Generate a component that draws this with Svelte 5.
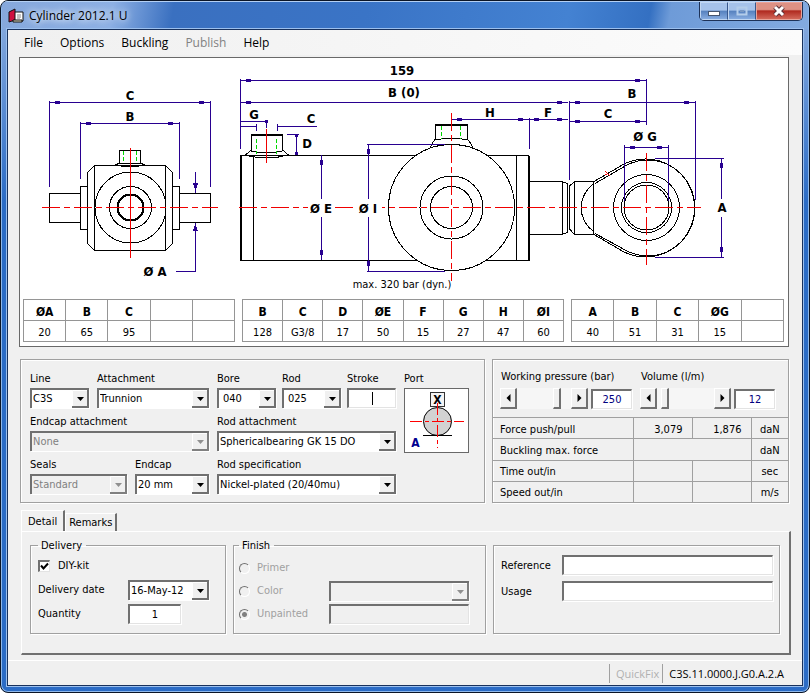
<script lang="ts">
	let pressure = $state(250);
	let volume = $state(12);
	let stroke = $state("");
	let port = $state("X");
	let tab = $state("Detail");

	const menus = ["File", "Options", "Buckling", "Publish", "Help"];

	// Dimension tables under the drawing
	const tables = [
		{ name: "Trunnion", head: ["ØA", "B", "C", "", ""], row: ["20", "65", "95", "", ""] },
		{
			name: "Cylinder",
			head: ["B", "C", "D", "ØE", "F", "G", "H", "ØI"],
			row: ["128", "G3/8", "17", "50", "15", "27", "47", "60"]
		},
		{ name: "Bearing", head: ["A", "B", "C", "ØG", ""], row: ["40", "51", "31", "15", ""] }
	];

	// Horizontal dimension lines: x1, x2, y
	const across = [
		[50, 210, 102],
		[81, 179, 123],
		[241, 646, 80],
		[241, 568, 102],
		[570, 695, 102],
		[452, 529, 119],
		[529, 568, 119],
		[570, 646, 121],
		[625, 668, 147]
	];

	// Vertical dimension lines: x, y1, y2
	const down = [
		[321, 155, 260],
		[368, 144, 271],
		[721, 158, 257]
	];

	// Letters in the drawing: text, centre x, baseline y
	const marks: [string, number, number][] = [
		["C", 130, 100],
		["B", 130, 121],
		["Ø A", 155, 276],
		["159", 402, 75],
		["B (0)", 404, 97],
		["G", 254, 119],
		["C", 311, 123],
		["D", 307, 148],
		["Ø E", 321, 213],
		["Ø I", 368, 213],
		["H", 490, 117],
		["F", 548, 117],
		["B", 632, 98],
		["C", 608, 118],
		["Ø G", 645, 141],
		["A", 722, 212]
	];

	const results = [
		{ label: "Force push/pull", cells: ["3,079", "1,876"], unit: "daN" },
		{ label: "Buckling max. force", cells: [""], unit: "daN" },
		{ label: "Time out/in", cells: ["", ""], unit: "sec" },
		{ label: "Speed out/in", cells: ["", ""], unit: "m/s" }
	];
</script>

{#snippet left()}
	<svg width="5" height="8" viewBox="0 0 5 8" aria-hidden="true"><path d="M4.5 0v8L.5 4z" /></svg>
{/snippet}

{#snippet right()}
	<svg width="5" height="8" viewBox="0 0 5 8" aria-hidden="true"><path d="M.5 0v8l4-4z" /></svg>
{/snippet}

<div class="window">
	<header class="titlebar">
		<svg class="app-icon" width="16" height="16" viewBox="0 0 16 16" aria-hidden="true">
			<path d="M6 4h9v9H6z" fill="#fff" stroke="#111" />
			<path d="M1 4l6-3v11l-6 2z" fill="#d01040" stroke="#111" />
			<path d="M5 12h9v2H5z" fill="#e8e4c8" stroke="#111" />
			<path d="M9 7h4M9 9h4M9 11h3" stroke="#888" />
		</svg>
		<h1>Cylinder 2012.1 U</h1>
		<div class="controls">
			<button aria-label="Minimize">
				<svg width="14" height="12" viewBox="0 0 14 12"><rect x="1.5" y="6.500" width="11" height="4" fill="#fff" stroke="#45556f" /></svg>
			</button>
			<button aria-label="Maximize" disabled>
				<svg width="14" height="12" viewBox="0 0 14 12" fill="none">
					<rect x="2.500" y="2.500" width="9" height="7" stroke="#b4cdea" stroke-width="2" />
					<rect x="5.500" y="5.500" width="3" height="1" stroke="#7898c4" />
				</svg>
			</button>
			<button class="close" aria-label="Close">
				<svg width="14" height="12" viewBox="0 0 14 12" fill="none">
					<path d="M3 2l8 8M11 2l-8 8" stroke="#5b3038" stroke-width="5" />
					<path d="M3 2l8 8M11 2l-8 8" stroke="#fff" stroke-width="3" />
				</svg>
			</button>
		</div>
	</header>

	<div class="client">
		<nav class="menu">
			{#each menus as item}
				<button disabled={item === "Publish"}>{item}</button>
			{/each}
		</nav>

		<main>
			<section class="sheet">
				<svg class="drawing" viewBox="20 58 768 240" role="img" aria-label="Cylinder drawing">
					<g class="body" shape-rendering="crispEdges">
						<!-- trunnion, end view -->
						<path d="M94.500 165.500h71l7 7v71l-7 7h-71l-7-7v-71zM94.500 165.500v85M165.500 165.500v85" />
						<path d="M87.500 186.500h-7v43h7M172.500 186.500h7v43h-7" />
						<path d="M80.500 193.500h-31v29h31M179.500 193.500h31v29h-31" />
						<path d="M119.500 163V150.500h21V163M119.500 163l-4 2M140.500 163l4 2M119.500 163h21M116 165q14 4 28 0" />
						<circle cx="130.500" cy="207.500" r="35.500" />
						<circle cx="130.500" cy="207.500" r="21" />
						<circle class="thick" cx="130.500" cy="207.500" r="13" />

						<!-- cylinder tube -->
						<path d="M241 155.500h175M487 155.500h42M241 260.500h175M487 260.500h42M253.500 155v105M516.500 155v105" />
						<path class="thick" d="M241 155v106M529 156v105" />
						<path d="M251.500 150v-15h31v15M251.500 150l-6 5M282.500 150l6 5M251.500 151q16 4 31 0M245 155q22 6 43 0" />
						<path class="thick" d="M251 135h32M435 125h33" />
						<path d="M435.500 125v14M467.500 125v14M435.500 140q16-4 32 0M435.500 139l-3 4-3 6M467.500 139l3 4 3 6" />
						<circle cx="451.500" cy="207.500" r="63" />
						<circle cx="451.500" cy="207.500" r="31.500" />
						<circle cx="451.500" cy="207.500" r="21" />

						<!-- rod and bearing -->
						<path d="M529 181.500h33l5 2v49l-5 2h-33M562.500 181v53M569.500 186l5-4.500h19.500M569.500 229l5 5.500h19.500M569.500 186v43M574.500 181v53M593.500 181v53" />
						<path d="M594 183c-17 14-17 36 0 49" />
						<path d="M594 181.500l30-17.500a49 49 0 1 1 0 88l-30-17.500M595 183.500l32-18.500a47 48 0 1 1 0 86l-32-17.500" />
						<circle cx="646.500" cy="207.500" r="33" />
						<circle cx="646.500" cy="207.500" r="25" />
						<circle cx="646.500" cy="207.500" r="22.500" />
					</g>

					<g class="thread" shape-rendering="crispEdges">
						<path d="M123.500 151v12M136.500 151v12M256.500 139v15M276.500 139v15M441.500 126v13M460.500 126v13" />
					</g>

					<g class="axis" shape-rendering="crispEdges">
						<path class="dash" d="M42 207.500h176M239 207.500h462" />
						<path d="M130.500 148v110M266.500 129v34M605 171l5 5M605 175l2-1" />
						<path class="dash" d="M451.500 113v168M646.500 153v112" />
					</g>

					<g class="dim" shape-rendering="crispEdges">
						<path d="M49.500 101v86M210.500 101v86M80.500 122v57M179.500 122v57" />
						<path d="M195.500 172v21M195.500 223v48h-20" />
						<path d="M240.500 79v70M646.500 79v46M569.500 101v79M695.500 101v99M529.500 118v31M624.500 145v56M668.500 145v56" />
						<path d="M241 121.500h25v6M241 126.500h15M256.500 124v7M277.500 124v7M277 126.500h40" />
						<path d="M287 134.500h12M296.500 134v21M367 144.500h78M367 271.500h78M655 158.500h69M655 257.500h69" />
						<path class="tip" d="M193 183h5l-2 7h-1zM195 225h1l2 6h-5zM265 120h3v3h-3zM295 134h3v3h-3zM295 152h3v3h-3zM245 126h6v1h-6zM282 126h6v1h-6z" />
						{#each across as [x1, x2, y]}
							<path d="M{x1} {y + 0.5}H{x2}" />
							<path class="tip" d="M{x1 + 5} {y - 1}h5v3h-5zM{x2 - 11} {y - 1}h5v3h-5z" />
						{/each}
						{#each down as [x, y1, y2]}
							<path d="M{x + 0.5} {y1}V{y2}" />
							<path class="tip" d="M{x - 1} {y1 + 5}h3v5h-3zM{x - 1} {y2 - 10}h3v5h-3z" />
						{/each}
					</g>

					<!-- letters sit on a gap in the lines -->
					<path class="gap" d="M308 199h27v18h-27zM355 199h27v18h-27zM714 199h16v18h-16z" />
					{#each marks as [text, x, y]}
						<text class="mark" {x} {y}>{text}</text>
					{/each}
					<text class="note" x="402" y="288">max. 320 bar (dyn.)</text>
				</svg>

				<div class="sizes">
					{#each tables as t}
						<table aria-label={t.name}>
							<thead>
								<tr>{#each t.head as h}<th>{h}</th>{/each}</tr>
							</thead>
							<tbody>
								<tr>{#each t.row as v}<td>{v}</td>{/each}</tr>
							</tbody>
						</table>
					{/each}
				</div>
			</section>

			<div class="middle">
				<section class="panel config">
					<div class="fields">
						<div class="row line-row">
							<label class="field">Line
								<select><option>C3S</option></select>
							</label>
							<label class="field">Attachment
								<select><option>Trunnion</option></select>
							</label>
						</div>
						<label class="field">Endcap attachment
							<select disabled><option>None</option></select>
						</label>
						<div class="row seal-row">
							<label class="field">Seals
								<select disabled><option>Standard</option></select>
							</label>
							<label class="field">Endcap
								<select><option>20 mm</option></select>
							</label>
						</div>
					</div>

					<div class="fields">
						<div class="row bore-row">
							<label class="field">Bore
								<select class="number"><option>040</option></select>
							</label>
							<label class="field">Rod
								<select class="number"><option>025</option></select>
							</label>
							<label class="field">Stroke
								<input class:caret={!stroke} type="text" bind:value={stroke} />
							</label>
						</div>
						<label class="field">Rod attachment
							<select><option>Sphericalbearing GK 15 DO</option></select>
						</label>
						<label class="field">Rod specification
							<select><option>Nickel-plated (20/40mu)</option></select>
						</label>
					</div>

					<div class="field port">
						<span id="port-label">Port</span>
						<button aria-labelledby="port-label" onclick={() => (port = port === "X" ? "A" : "X")}>
							<svg width="63" height="63" viewBox="0 0 63 63">
								<rect x="25.500" y="3.500" width="14" height="14" fill="#f4f4f4" stroke="#333" />
								<circle cx="32.500" cy="32.500" r="14" fill="#d2d2d2" stroke="#000" />
								<path d="M18 46.500h29" stroke="#000" />
								<text x="32.500" y="15" class="port-x">X</text>
								<text x="10.500" y="58" class="port-a">A</text>
								<path d="M5 32.500h54M32.500 14v45" stroke="#f00" stroke-dasharray="12 3 4 3" fill="none" />
							</svg>
						</button>
					</div>
				</section>

				<section class="panel output">
					<div class="gauges">
						<div class="gauge">
							<label for="pressure">Working pressure (bar)</label>
							<div class="scroll">
								<button aria-label="Less pressure" onclick={() => pressure--}>{@render left()}</button>
								<input id="pressure" type="range" min="0" max="320" bind:value={pressure} />
								<button aria-label="More pressure" onclick={() => pressure++}>{@render right()}</button>
								<input type="text" aria-label="Pressure value" bind:value={pressure} />
							</div>
						</div>
						<div class="gauge">
							<label for="volume">Volume (l/m)</label>
							<div class="scroll">
								<button aria-label="Less volume" onclick={() => volume--}>{@render left()}</button>
								<input id="volume" type="range" min="0" max="140" bind:value={volume} />
								<button aria-label="More volume" onclick={() => volume++}>{@render right()}</button>
								<input type="text" aria-label="Volume value" bind:value={volume} />
							</div>
						</div>
					</div>
					<table class="results">
						<colgroup><col class="name" /><col class="value" /><col class="value" /><col /></colgroup>
						<tbody>
							{#each results as r}
								<tr>
									<th scope="row">{r.label}</th>
									{#each r.cells as c}
										<td colspan={r.cells.length === 1 ? 2 : 1}>{c}</td>
									{/each}
									<td class="unit">{r.unit}</td>
								</tr>
							{/each}
						</tbody>
					</table>
				</section>
			</div>

			<div class="tabs" role="tablist">
				{#each ["Detail", "Remarks"] as name}
					<button role="tab" aria-selected={tab === name} class:active={tab === name} onclick={() => (tab = name)}>{name}</button>
				{/each}
			</div>
			<section class="page" role="tabpanel">
				<fieldset class="delivery">
					<legend>Delivery</legend>
					<label class="check"><input type="checkbox" checked /> DIY-kit</label>
					<label for="date">Delivery date</label>
					<select id="date"><option>16-May-12</option></select>
					<label for="quantity">Quantity</label>
					<input id="quantity" type="text" value="1" />
				</fieldset>

				<fieldset class="finish" disabled>
					<legend>Finish</legend>
					<label class="radio"><input type="radio" name="finish" /> Primer</label>
					<span></span>
					<label class="radio"><input type="radio" name="finish" /> Color</label>
					<select aria-label="Color"><option></option></select>
					<label class="radio"><input type="radio" name="finish" checked /> Unpainted</label>
					<input type="text" aria-label="Paint note" />
				</fieldset>

				<fieldset class="refs">
					<label for="reference">Reference</label>
					<input id="reference" type="text" />
					<label for="usage">Usage</label>
					<input id="usage" type="text" />
				</fieldset>
			</section>
		</main>

		<footer>
			<span class="quick">QuickFix</span>
			<span class="code">C3S.11.0000.J.G0.A.2.A</span>
		</footer>
	</div>
</div>

<style>
	:global(body) {
		background: #fff;
	}

	.window,
	.window * {
		box-sizing: border-box;
	}

	.window {
		font: 11px/16px "DejaVu Sans Condensed", "DejaVu Sans", Tahoma, sans-serif;
		color: #000;
		padding: 0 6px 6px;
		border: 1px solid #0b1526;
		border-radius: 8px;
		background: linear-gradient(#8fb0e0, #2b6cc6 200px);
		box-shadow: inset 0 0 0 1px #8fb8ea;
		overflow: hidden;
	}

	button,
	input,
	select {
		font: inherit;
		color: inherit;
		margin: 0;
		border-radius: 0;
	}

	.titlebar {
		display: flex;
		align-items: center;
		height: 28px;
		margin: 0 -5px;
		padding: 0 5px 0 6px;
		border-top: 1px solid #b4d0f4;
		background: linear-gradient(100deg, #86a8dc 0, #8db0e4 110px, #3a70c0 170px, #3a74c6 360px, #4482d2 560px, #3470c2 640px, #6e9bd8 660px, #83abe0 100%);
	}

	.app-icon {
		margin-right: 5px;
	}

	h1 {
		flex: 1;
		margin: 0;
		font: 12px/16px "Open Sans", "Noto Sans", sans-serif;
		text-shadow: 0 0 6px #fff, 0 0 8px #dfeaf8;
	}

	.controls {
		display: flex;
		align-self: flex-start;
		border: 1px solid #1d3258;
		border-top: 0;
		border-radius: 0 0 5px 5px;
		overflow: hidden;
	}

	.controls button {
		display: flex;
		align-items: center;
		justify-content: center;
		width: 28px;
		height: 18px;
		padding: 0;
		border: 1px solid #c0d6f2;
		border-right-color: #38578c;
		background: linear-gradient(#a5c2ea 45%, #5580be 50%, #86abdf);
	}

	.controls .close {
		width: 46px;
		border-color: #e8a49a;
		background: linear-gradient(#dd9184 40%, #b02a20 50%, #d2685a);
	}

	.client {
		border: 1px solid #18315c;
		outline: 1px solid #9cc0ee;
		background: #f0f0f0;
	}

	.menu {
		display: flex;
		gap: 17px;
		height: 25px;
		padding-left: 16px;
		background: linear-gradient(90deg, #f0f0f0, #fcfcfc);
	}

	.menu button {
		padding: 0;
		border: 0;
		background: none;
		font: 12px/24px "Open Sans", "Noto Sans", sans-serif;
	}

	.menu button:disabled {
		color: #828282;
	}

	main {
		padding: 2px 13px 5px 11px;
	}

	.sheet {
		border: 1px solid #696969;
		background: #fff;
	}

	.drawing {
		display: block;
		width: 100%;
	}

	.body {
		fill: none;
		stroke: #000;
	}

	.body .thick {
		stroke-width: 2;
	}

	.thread {
		stroke: #00d800;
		stroke-dasharray: 4 2;
	}

	.axis {
		stroke: #f00000;
	}

	.axis .dash {
		stroke-dasharray: 18 4 6 4;
	}

	.dim {
		fill: none;
		stroke: #280090;
	}

	.dim .tip {
		fill: #280090;
		stroke: none;
	}

	.gap {
		fill: #fff;
	}

	.mark {
		font-size: 13px;
		font-weight: bold;
		text-anchor: middle;
	}

	.note {
		text-anchor: middle;
	}

	table {
		border-collapse: collapse;
		table-layout: fixed;
		width: 100%;
	}

	.sizes {
		display: grid;
		grid-template-columns: 212fr 322fr 213fr;
		gap: 7px;
		padding: 1px 4px 4px 3px;
	}

	.sizes th,
	.sizes td {
		height: 21px;
		padding: 4px 0 0;
		border: 1px solid #959595;
		text-align: center;
	}

	.sizes th {
		font-size: 12px;
	}

	.middle {
		display: grid;
		grid-template-columns: 465fr 297fr;
		gap: 7px;
		margin: 12px 0 0 1px;
	}

	.panel {
		border: 1px solid #a0a0a0;
		box-shadow: 1px 1px 0 #fff, inset 1px 1px 0 #fff;
	}

	.config {
		display: grid;
		grid-template-columns: 1fr 1fr 65px;
		gap: 8px;
		padding: 10px 15px 8px 9px;
	}

	.fields {
		display: grid;
		gap: 5px;
		align-content: start;
	}

	.field {
		display: flex;
		flex-direction: column;
		min-width: 0;
		line-height: 18px;
	}

	.row {
		display: grid;
		gap: 8px;
	}

	.line-row {
		grid-template-columns: 59fr 112fr;
	}

	.seal-row {
		grid-template-columns: 97fr 74fr;
	}

	.bore-row {
		grid-template-columns: 59fr 59fr 49fr;
		gap: 6px;
	}

	select {
		appearance: none;
		width: 100%;
		height: 20px;
		padding: 0 17px 0 1px;
		border: solid #707070;
		border-width: 2px 0 0 2px;
		outline: 0;
		background: #fff url("data:image/svg+xml,%3Csvg xmlns='http://www.w3.org/2000/svg' width='17' height='18'%3E%3Cpath fill='%23f0f0f0' d='M0 0h17v18H0z'/%3E%3Cpath stroke='%23fff' fill='none' d='M.5 17V.5H15'/%3E%3Cpath stroke='%23707070' stroke-width='2' fill='none' d='M0 17h16V0'/%3E%3Cpath d='M5 7h7L8.500 11z'/%3E%3C/svg%3E") right top no-repeat;
		box-shadow: 1px 1px 0 #fff;
	}

	select:disabled {
		opacity: 1;
		color: #808080;
		background: #f0f0f0 url("data:image/svg+xml,%3Csvg xmlns='http://www.w3.org/2000/svg' width='17' height='18'%3E%3Cpath fill='%23f0f0f0' d='M0 0h17v18H0z'/%3E%3Cpath stroke='%23fff' fill='none' d='M.5 17V.5H15'/%3E%3Cpath stroke='%23808080' stroke-width='2' fill='none' d='M0 17h16V0'/%3E%3Cpath fill='%23909090' d='M5 7h7L8.500 11z'/%3E%3C/svg%3E") right top no-repeat;
	}

	select.number {
		padding-left: 4px;
	}

	input[type="text"] {
		width: 100%;
		height: 20px;
		padding: 0 2px;
		border: solid #707070;
		border-width: 2px 1px 1px 2px;
		border-right-color: #e3e3e3;
		border-bottom-color: #e3e3e3;
		outline: 0;
		background: #fff;
		box-shadow: 1px 1px 0 #fff;
		text-align: center;
	}

	input[type="text"].caret {
		background: #fff linear-gradient(#000, #000) center / 1px 13px no-repeat;
	}

	input[type="text"]:disabled {
		background: #f0f0f0;
	}

	.port button {
		width: 65px;
		height: 65px;
		padding: 0;
		border: 1px solid #696969;
		background: #fff;
	}

	.port svg {
		display: block;
	}

	.port-x {
		font-size: 12px;
		font-weight: bold;
		text-anchor: middle;
	}

	.port-a {
		font-size: 12px;
		font-weight: bold;
		text-anchor: middle;
		fill: #000090;
	}

	.output {
		display: flex;
		flex-direction: column;
		border-bottom: 0;
	}

	.gauges {
		display: grid;
		grid-template-columns: 132fr 135fr;
		gap: 8px;
		padding: 9px 13px 8px 7px;
	}

	.gauge {
		display: grid;
		gap: 3px;
	}

	.gauge label {
		padding-left: 1px;
	}

	.scroll {
		display: flex;
		align-items: center;
		height: 21px;
	}

	.scroll button {
		display: flex;
		align-items: center;
		justify-content: center;
		flex: none;
		width: 17px;
		height: 21px;
		padding: 0;
		border: solid;
		border-width: 1px 2px 2px 1px;
		border-color: #fff #707070 #707070 #fff;
		background: #f0f0f0;
	}

	.scroll input[type="text"] {
		flex: none;
		width: 41px;
		margin-left: 3px;
		color: #000080;
	}

	input[type="range"] {
		appearance: none;
		flex: 1;
		min-width: 0;
		width: 54px;
		height: 21px;
		background: #f6f6f6;
	}

	input[type="range"]::-webkit-slider-thumb {
		appearance: none;
		width: 8px;
		height: 21px;
		border: solid;
		border-width: 1px 2px 2px 1px;
		border-color: #fff #707070 #707070 #fff;
		background: #f0f0f0;
	}

	.results {
		flex: 1;
		height: 87px;
	}

	.results .name {
		width: 140px;
	}

	.results .value {
		width: 59px;
	}

	.results th,
	.results td {
		padding: 3px 9px 0 7px;
		border: 1px solid #a0a0a0;
		font-weight: normal;
		text-align: right;
	}

	.results th {
		border-left: 0;
		text-align: left;
	}

	.results .unit {
		padding: 3px 0 0;
		border-right: 0;
		text-align: center;
	}

	.tabs {
		display: flex;
		align-items: flex-end;
		height: 21px;
		margin: 7px 0 0 2px;
	}

	.tabs button {
		height: 18px;
		padding: 0 3px;
		border: solid;
		border-width: 1px 2px 0 1px;
		border-color: #fff #707070 #fff #fff;
		background: #f0f0f0;
	}

	.tabs .active {
		height: 21px;
		padding: 2px 6px 0;
	}

	.page {
		display: grid;
		grid-template-columns: 196fr 253fr 287fr;
		gap: 7px;
		margin-right: -2px;
		margin-left: 2px;
		padding: 6px 9px 19px 8px;
		border: solid;
		border-width: 1px 2px 2px 1px;
		border-color: #fff #707070 #707070 #fff;
	}

	fieldset {
		display: grid;
		align-content: start;
		align-items: center;
		min-width: 0;
		margin: 0;
		border: 1px solid #a0a0a0;
		box-shadow: 1px 1px 0 #fff, inset 1px 1px 0 #fff;
	}

	legend {
		padding: 1px 4px 0 3px;
		line-height: 14px;
	}

	.delivery {
		grid-template-columns: 90px 81px;
		grid-auto-rows: 22px;
		gap: 2px 0;
		padding: 2px 7px 8px;
	}

	.check {
		display: flex;
		grid-column: span 2;
		align-items: center;
		gap: 8px;
	}

	.check input {
		appearance: none;
		width: 12px;
		height: 12px;
		border: solid;
		border-width: 2px 1px 1px 2px;
		border-color: #707070 #e3e3e3 #e3e3e3 #707070;
		background: #fff;
	}

	.check input:checked {
		background: #fff url("data:image/svg+xml,%3Csvg xmlns='http://www.w3.org/2000/svg' width='9' height='9'%3E%3Cpath d='M1 3.500l2.500 3L8 1.500' fill='none' stroke='%23000' stroke-width='2'/%3E%3C/svg%3E") center no-repeat;
	}

	.delivery input[type="text"] {
		width: 53px;
	}

	.finish {
		grid-template-columns: 90fr 140fr;
		grid-auto-rows: 22px;
		gap: 1px 0;
		padding: 4px 16px 8px 5px;
		color: #a0a0a0;
	}

	.finish legend {
		color: #000;
	}

	.radio {
		display: flex;
		align-items: center;
		gap: 7px;
	}

	.radio input {
		appearance: none;
		width: 11px;
		height: 11px;
		border: 1px solid;
		border-color: #707070 #fff #fff #707070;
		border-radius: 50%;
	}

	.radio input:checked {
		background: radial-gradient(#808080 2px, transparent 3px);
	}

	.refs {
		grid-template-columns: 61px 1fr;
		grid-auto-rows: 22px;
		gap: 4px 0;
		margin-top: 7px;
		padding: 8px 6px 8px 7px;
	}

	.refs label {
		padding-top: 2px;
	}

	footer {
		display: flex;
		align-items: center;
		justify-content: flex-end;
		height: 25px;
		padding: 3px 18px 2px 0;
		border-top: 1px solid #fff;
		font: 11px/19px "Open Sans", "Noto Sans", sans-serif;
	}

	footer span {
		padding-left: 6px;
		border-left: 1px solid #a0a0a0;
	}

	.quick {
		padding-right: 3px;
		color: #b0b0b0;
	}
</style>
